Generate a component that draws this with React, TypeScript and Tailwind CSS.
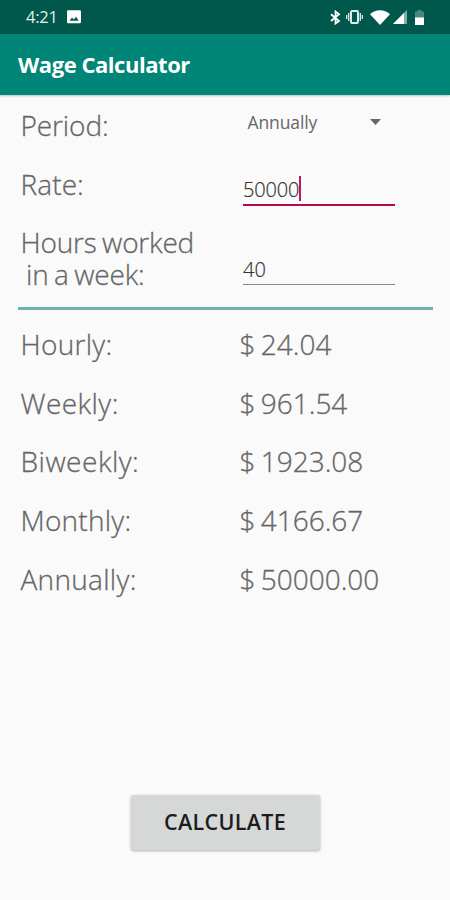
interface Result {
  label: string
  amount: string
  spacing: string
}

const results: Result[] = [
  { label: "Hourly:", amount: "24.04", spacing: "tracking-[0.3px]" },
  { label: "Weekly:", amount: "961.54", spacing: "tracking-[0.45px]" },
  { label: "Biweekly:", amount: "1923.08", spacing: "tracking-[0.5px]" },
  { label: "Monthly:", amount: "4166.67", spacing: "tracking-[0.25px]" },
  { label: "Annually:", amount: "50000.00", spacing: "tracking-[0.3px]" },
]

function StatusBar() {
  return (
    <div className="flex h-[34px] items-center justify-between bg-[#00574b] pl-[26px] pr-[25px] text-white">
      <div className="flex items-center gap-[10px]">
        <span className="w-[31px] whitespace-nowrap text-[16.5px] font-normal leading-none tracking-[-0.2px] text-[#e6efed]">4:21</span>
        <svg width="14" height="14" viewBox="0 0 14 14">
          <rect width="14" height="13" y="0.3" rx="1.2" fill="#fff" />
          <path d="M2.5 10.8 5 7.6l1.7 2L9 6.8l2.7 4z" fill="#00574b" />
        </svg>
      </div>
      <div className="flex items-center">
        {/* Bluetooth */}
        <svg width="11" height="15" viewBox="0 0 11 15" fill="none" stroke="#fff" strokeWidth="1.8">
          <path d="M1 4.2 9 11 5.5 13.5v-12L9 4.2 1 11" />
        </svg>
        {/* Vibrate */}
        <svg className="ml-[5px]" width="17" height="14" viewBox="0 0 17 14" fill="none" stroke="#dcebe8">
          <rect x="5" y="1" width="7" height="12" rx="1" strokeWidth="2" />
          <path d="M2.7 3v8M14.3 3v8M.7 5v4M16.3 5v4" strokeWidth="1.3" />
        </svg>
        {/* Wifi */}
        <svg className="ml-[7px]" width="20" height="15" viewBox="0 0 20 15">
          <path d="M0 4.2C5.500-1 14.500-1 20 4.200L10 15z" fill="#fff" />
        </svg>
        {/* Signal */}
        <svg className="ml-[3px]" width="14" height="14" viewBox="0 0 14 14">
          <path d="M0 14 14 0v14z" fill="#7fb0a8" />
          <path d="M0 14 11 3v11z" fill="#fff" />
        </svg>
        {/* Battery */}
        <svg className="ml-[8px] mr-px" width="9" height="15" viewBox="0 0 9 15">
          <path d="M2.500 0h4v1.500H9V8H0V1.500h2.500z" fill="#4c877d" />
          <path d="M0 7.500h9V15H0z" fill="#fff" />
        </svg>
      </div>
    </div>
  )
}

export default function App() {
  return (
    <div className="flex h-[900px] w-[450px] flex-col overflow-hidden bg-[#fafafa] font-['Open_Sans',sans-serif] font-light text-[#666]">
      <StatusBar />
      <header className="flex h-[61px] shrink-0 items-center bg-[#008577] pl-[18px] shadow-[0_1px_2px_rgba(0,0,0,0.25)]">
        <h1 className="text-[22px] font-bold tracking-[-0.45px] text-white">Wage Calculator</h1>
      </header>

      <main className="flex grow flex-col">
        {/* Inputs */}
        <div className="flex h-[59px] items-center pl-[20.5px] text-[28px]">
          <span className="w-[227px] tracking-[-0.1px] [-webkit-text-stroke:0.3px]">Period:</span>
          <div className="flex w-[133px] items-center justify-between pb-[5px]">
            <span className="text-[17.5px] font-normal tracking-[-0.1px]">Annually</span>
            <svg width="11" height="6" viewBox="0 0 11 6">
              <path d="M0 0h11L5.500 6z" fill="#666" />
            </svg>
          </div>
        </div>
        <div className="flex h-[59px] pl-[20.5px] text-[28px]">
          <span className="w-[222.5px] leading-[60px] tracking-[0.1px] [-webkit-text-stroke:0.3px]">Rate:</span>
          <div className="mt-[20px] flex h-[32px] w-[152px] items-start border-b-2 border-[#b5094f]">
            <span className="text-[20px] leading-[31px] tracking-[-0.15px] text-[#333] [-webkit-text-stroke:0.2px]">50000</span>
            <span className="mt-[2px] h-[25px] w-[2px] bg-[#c2185b]" />
          </div>
        </div>
        <div className="flex h-[94px] pl-[20.5px] text-[28px]">
          <span className="mt-[13px] w-[222.5px] whitespace-pre leading-[32px] tracking-[-0.2px] [-webkit-text-stroke:0.3px] [word-spacing:-1.500px]">{"Hours worked\n in a week:"}</span>
          <div className="mt-[41px] flex h-[31px] w-[152px] items-start border-b border-[#888]">
            <span className="text-[20px] leading-[31px] text-[#333] [-webkit-text-stroke:0.2px]">40</span>
          </div>
        </div>
        <hr className="ml-[18px] mr-[17px] h-[3px] border-0 bg-[#6db3ab]" />

        {/* Results */}
        <div className="mt-[4.6px] flex flex-col pl-[20.5px] text-[28px] [-webkit-text-stroke:0.3px]">
          {results.map((result) => (
            <div key={result.label} className="flex h-[58.7px] items-center">
              <span className={`w-[219px] ${result.spacing}`}>{result.label}</span>
              <span className="[word-spacing:-2px]">$ {result.amount}</span>
            </div>
          ))}
        </div>

        <button className="mx-auto mb-[50px] mt-auto h-[55px] w-[189px] rounded-[2px] bg-[#d6d8d7] text-[21.5px] font-semibold tracking-[0.3px] text-[#1c1c1c] shadow-[0_1px_3px_rgba(0,0,0,0.3)]">
          CALCULATE
        </button>
      </main>
    </div>
  )
}
